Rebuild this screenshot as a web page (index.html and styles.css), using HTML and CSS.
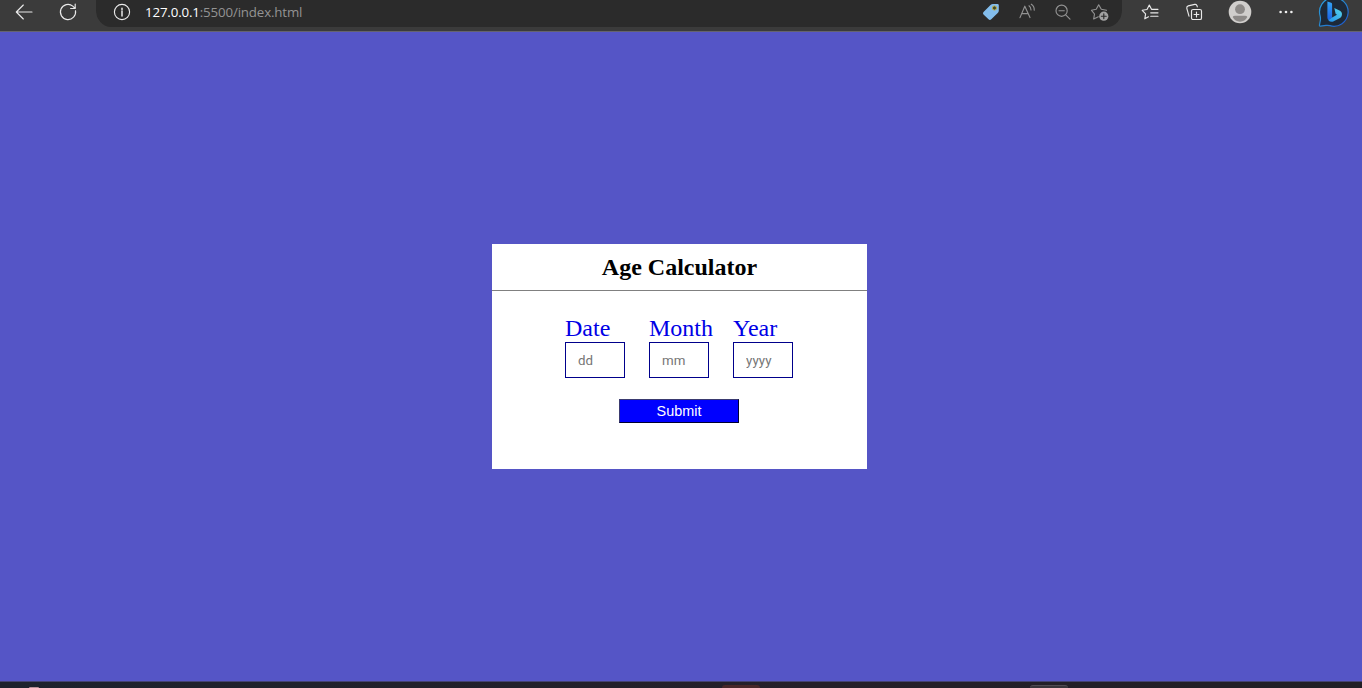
FILE: index.html
```html
<!DOCTYPE html>
<html lang="en">
<head>
<meta charset="utf-8">
<title>Age Calculator</title>
<link rel="stylesheet" href="styles.css">
</head>
<body>
<header class="toolbar">
  <svg class="icon back" viewBox="-12 -12 24 24"><path d="M8 0H-7.5M-.7-7L-7.7 0L-.7 7"/></svg>
  <svg class="icon reload" viewBox="-12 -12 24 24"><path d="M7.5-1.3A7.6 7.6 0 1 1 4.8-5.9L7-3.7M7.2-8V-3.5H2.6"/></svg>
  <div class="address">
    <svg class="icon" viewBox="-12 -12 24 24"><circle r="7.6"/><path d="M0-1V4M0-3.8V-2.4" stroke-width="1.5"/></svg>
    <span class="url"><b>127.0.0.1</b>:5500/index.html</span>
    <div class="tools">
      <svg class="icon" viewBox="-11.5 -12 24 24"><path class="tag" d="M0-7Q1-8 2.5-8H7Q8.3-8 8.3-6.7V-1.5Q8.3 0 7.2 1L.8 7.3Q-.7 8.5-2 7.2L-7 2.4Q-8.2 1.2-7 0Z"/><circle class="tag-hole" cx="4" cy="-4" r="2.1"/></svg>
      <svg class="icon dim" viewBox="-12 -12 24 24"><path d="M-7 5.6L-2.2-5.8L3 5.6M-5.4 1.6H1.1M2-6.2Q4-4.7 4-2M4.3-7.8Q7.5-5.7 7.2-1.9"/></svg>
      <svg class="icon dim" viewBox="-12 -12 24 24"><circle cx="-1.4" cy="-1.3" r="5.6"/><path d="M2.7 2.8L7 7.1M-4-1.3H1.3"/></svg>
      <svg class="icon dim" viewBox="-12.5 -12 24 24"><path d="M-1.2 4.8L-5.8 7L-5 2L-8-1.7L-3.3-2.7L-.8-7.2L1.8-2.7L7-1.7"/><circle class="plus-badge" cx="4.3" cy="4.2" r="4.6"/><path class="plus-mark" d="M4.3 1.8V6.6M1.9 4.2H6.7"/></svg>
    </div>
  </div>
  <svg class="icon favorites" viewBox="-12 -12 24 24"><path d="M-1.5 4.8L-5.2 6.8L-4.4 1.8L-7.8-1.7L-3-2.5L-.7-7L1.5-2.7H8M.7 .8H8M.7 4.2H8"/></svg>
  <svg class="icon collections" viewBox="-12 -12 24 24"><rect x="-2.5" y="-2.5" width="10" height="10" rx="1.6"/><path d="M2.5 .1V4.9M.1 2.5H4.9M-5 4.2L-7.2-3.7Q-7.6-5.5-5.8-6.1L.8-7.6Q2.4-8 3-6.3L3.3-5.2"/></svg>
  <svg class="icon profile" viewBox="-12 -12 24 24"><circle class="avatar-bg" r="11.3"/><circle class="avatar-fg" cy="-2.8" r="4.9"/><path class="avatar-fg" d="M-7.3 5Q-6.8 3.8-5 3.8H5Q6.8 3.8 7.3 5Q5 9.6 0 9.7Q-5 9.6-7.3 5Z"/></svg>
  <svg class="icon more" viewBox="-12 -12 24 24"><g class="dots"><circle cx="-5.4" r="1.3"/><circle r="1.3"/><circle cx="5.4" r="1.3"/></g></svg>
  <svg class="bing" viewBox="-16 -16 32 32">
    <defs>
      <linearGradient id="ring" x1="0" y1="0" x2="1" y2="1"><stop offset="0" stop-color="#2c9fe0"/><stop offset=".5" stop-color="#2687d0"/><stop offset="1" stop-color="#1a50ce"/></linearGradient>
      <linearGradient id="stem" x1="0" y1="0" x2="0" y2="1"><stop offset="0" stop-color="#34a4f5"/><stop offset="1" stop-color="#1b62e5"/></linearGradient>
      <linearGradient id="bowl" x1="0" y1="1" x2="1" y2="0"><stop offset="0" stop-color="#2290ed"/><stop offset="1" stop-color="#58d6e8"/></linearGradient>
    </defs>
    <path class="bubble" d="M-13.4 14.2Q-14.8 14.2-14.5 12.8L-13.6 8Q-13.4 6.5-13.8 4.2A14.3 14.3 0 1 1-4 13.7Q-6 13.1-8 13.4Z"/>
    <path class="stem" d="M-6.6-10.5L-2.8-9.2Q-1.9-8.9-1.9-7.8V5.5L-5.5 8Q-6.6 7-6.6 5.5Z"/>
    <path class="bowl" d="M.3-4L6-1.2Q8.6 .4 7.8 3.5Q7.4 5 6 6L-.8 9.6Q-3.6 10.5-5.9 7.9L-1.9 5.6L3 2.7L1.6 1.7Z"/>
  </svg>
</header>
<main class="page">
  <section class="card">
    <h1 class="title">Age Calculator</h1>
    <form class="form">
      <div class="fields">
        <label class="field">Date<input class="input" type="text" placeholder="dd"></label>
        <label class="field">Month<input class="input" type="text" placeholder="mm"></label>
        <label class="field">Year<input class="input" type="text" placeholder="yyyy"></label>
      </div>
      <button class="submit" type="button">Submit</button>
    </form>
  </section>
</main>
<footer class="taskbar"><i class="task-dot"></i><i class="task-red"></i><i class="task-gray"></i></footer>
</body>
</html>
```
FILE: styles.css
```css
* { box-sizing: border-box; }
body { margin: 0; height: 688px; overflow: hidden; display: flex; flex-direction: column; background: #5555c6; }

.toolbar { flex: none; height: 32px; display: flex; align-items: flex-start; padding-left: 12px; background: #3b3b3b; border-bottom: 1px solid #65636f; overflow: hidden; }
.icon { flex: none; display: block; width: 24px; height: 24px; fill: none; stroke: #e9e9e9; stroke-width: 1.15; stroke-linecap: round; stroke-linejoin: round; }
.back { margin-right: 20px; }
.reload { margin-right: 16px; }
.address { width: 1026px; height: 27px; flex: none; display: flex; padding: 0 11px 0 14px; background: #2b2b2b; border-radius: 0 0 15px 15px / 0 0 17px 17px; }
.url { margin-left: 11px; font: 13.3px/25px "Open Sans", "Noto Sans", sans-serif; letter-spacing: -.15px; color: #939393; white-space: nowrap; }
.url b { font-weight: 400; color: #fff; }
.tools { display: flex; gap: 12px; margin-left: auto; }
.dim { stroke: #929292; }
.tag { fill: #83bdec; stroke: none; }
.tag-hole { fill: #3e4930; stroke: #b9ae4d; stroke-width: 1; }
.plus-badge { fill: #a2a2a2; stroke: none; }
.plus-mark { stroke: #2b2b2b; }
.favorites { margin-left: 16px; }
.collections { margin-left: 20px; }
.profile, .more { margin-left: 22px; }
.avatar-bg { fill: #d0cecc; stroke: none; }
.avatar-fg { fill: #8c8987; stroke: none; }
.dots { fill: #f0f0f0; stroke: none; }
.bing { flex: none; width: 32px; height: 32px; margin: -4px 0 0 20px; }
.bubble { fill: #1d2938; stroke: url(#ring); stroke-width: 1.2; }
.stem { fill: url(#stem); }
.bowl { fill: url(#bowl); }

.page { flex: 1; display: flex; justify-content: center; align-items: flex-start; padding: 212px 3px 0 0; }
.card { width: 375px; height: 225px; background: #fff; font-family: "Liberation Serif", "Times New Roman", serif; }
.title { margin: 0; height: 47px; border-bottom: 1px solid #808080; font-size: 24px; line-height: 46px; text-align: center; color: #000; }
.form { display: flex; flex-direction: column; align-items: center; padding: 23px 1px 0 0; }
.fields { display: flex; gap: 24px; }
.field { display: flex; flex-direction: column; width: 60px; font-size: 24px; line-height: 28px; color: #0000e6; white-space: nowrap; }
.input { width: 60px; height: 36px; padding: 0 12px; border: 1px solid #00008b; border-radius: 0; background: #fff; font: 13.33px Roboto, sans-serif; letter-spacing: .1px; outline: none; }
.input::placeholder { color: #757575; }
.submit { width: 120px; height: 24px; margin-top: 21px; padding: 0; border: 1px solid; border-color: #3a3a70 #000030 #000030 #3a3a70; border-radius: 0; background: #00f; color: #fff; font: 14.4px/20px "Liberation Sans", Arial, sans-serif; }

.taskbar { flex: none; height: 7px; display: flex; align-items: flex-end; overflow: hidden; border-top: 1px solid #444273; background: linear-gradient(90deg, #1d222d, #251f29 60%, #211f25); }
.task-dot { width: 10px; height: 1px; margin-left: 29px; border-radius: 5px 5px 0 0; background: #b78f98; }
.task-red { width: 38px; height: 3px; margin-left: 683px; border-radius: 3px 3px 0 0; background: #482729; }
.task-gray { width: 38px; height: 3px; margin-left: 270px; border-top: 1px solid #514c53; border-radius: 3px 3px 0 0; background: #39343a; }
```
